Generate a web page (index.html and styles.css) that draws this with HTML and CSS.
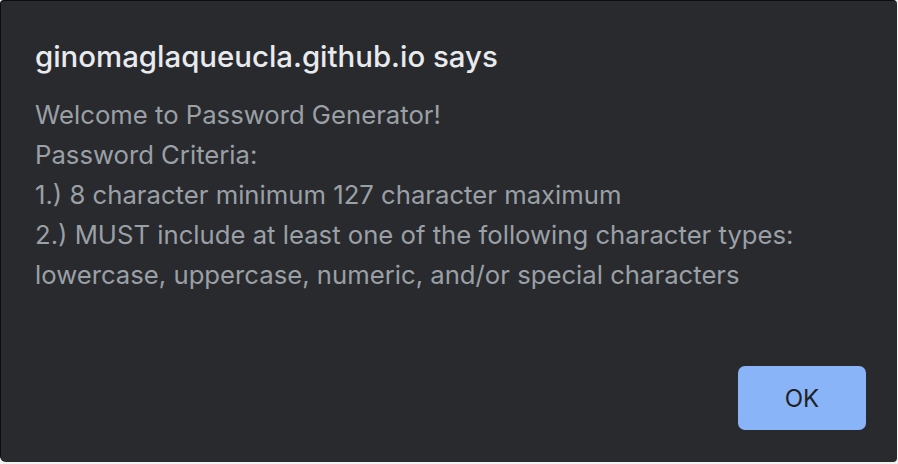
FILE: index.html
```html
<!DOCTYPE html>
<html>
<head>
<meta charset="utf-8">
<link rel="stylesheet" href="styles.css">
</head>
<body>
<div class="dialog">
  <h1 class="title">ginomaglaqueucla.github.io says</h1>
  <div class="message">
    <p>Welcome to Password Generator!</p>
    <p>Password Criteria:</p>
    <p>1.) 8 character minimum 127 character maximum</p>
    <p>2.) MUST include at least one of the following character types:</p>
    <p>lowercase, uppercase, numeric, and/or special characters</p>
  </div>
  <div class="actions">
    <button class="ok">OK</button>
  </div>
</div>
</body>
</html>
```

FILE: styles.css
```css
html, body {
  margin: 0;
  padding: 0;
  background: #f2f2f2;
  width: 898px;
  height: 464px;
  overflow: hidden;
}
.dialog {
  box-sizing: border-box;
  width: 897px;
  height: 462px;
  background: #292a2d;
  border-top: 1px solid #0d0d0e;
  border-left: 1px solid #0d0d0e;
  border-radius: 4px 4px 4px 6px;
  display: flex;
  flex-direction: column;
  padding: 0 31px 32px 34px;
  font-family: Inter, "Noto Sans", sans-serif;
}
.title {
  margin: 38px 0 0 0;
  font-size: 29.4px;
  line-height: 36px;
  font-weight: 500;
  color: #e8eaed;
}
.message {
  margin-top: 20px;
  color: #9aa0a6;
  font-size: 25.7px;
  line-height: 40px;
}
.message p {
  margin: 0;
}
.actions {
  margin-top: auto;
  display: flex;
  justify-content: flex-end;
}
.ok {
  width: 128px;
  height: 64px;
  border: none;
  border-radius: 7px;
  background: #8ab4f8;
  color: #202124;
  font-family: Inter, "Noto Sans", sans-serif;
  font-size: 24px;
  font-weight: 400;
  padding: 0;
}
```
